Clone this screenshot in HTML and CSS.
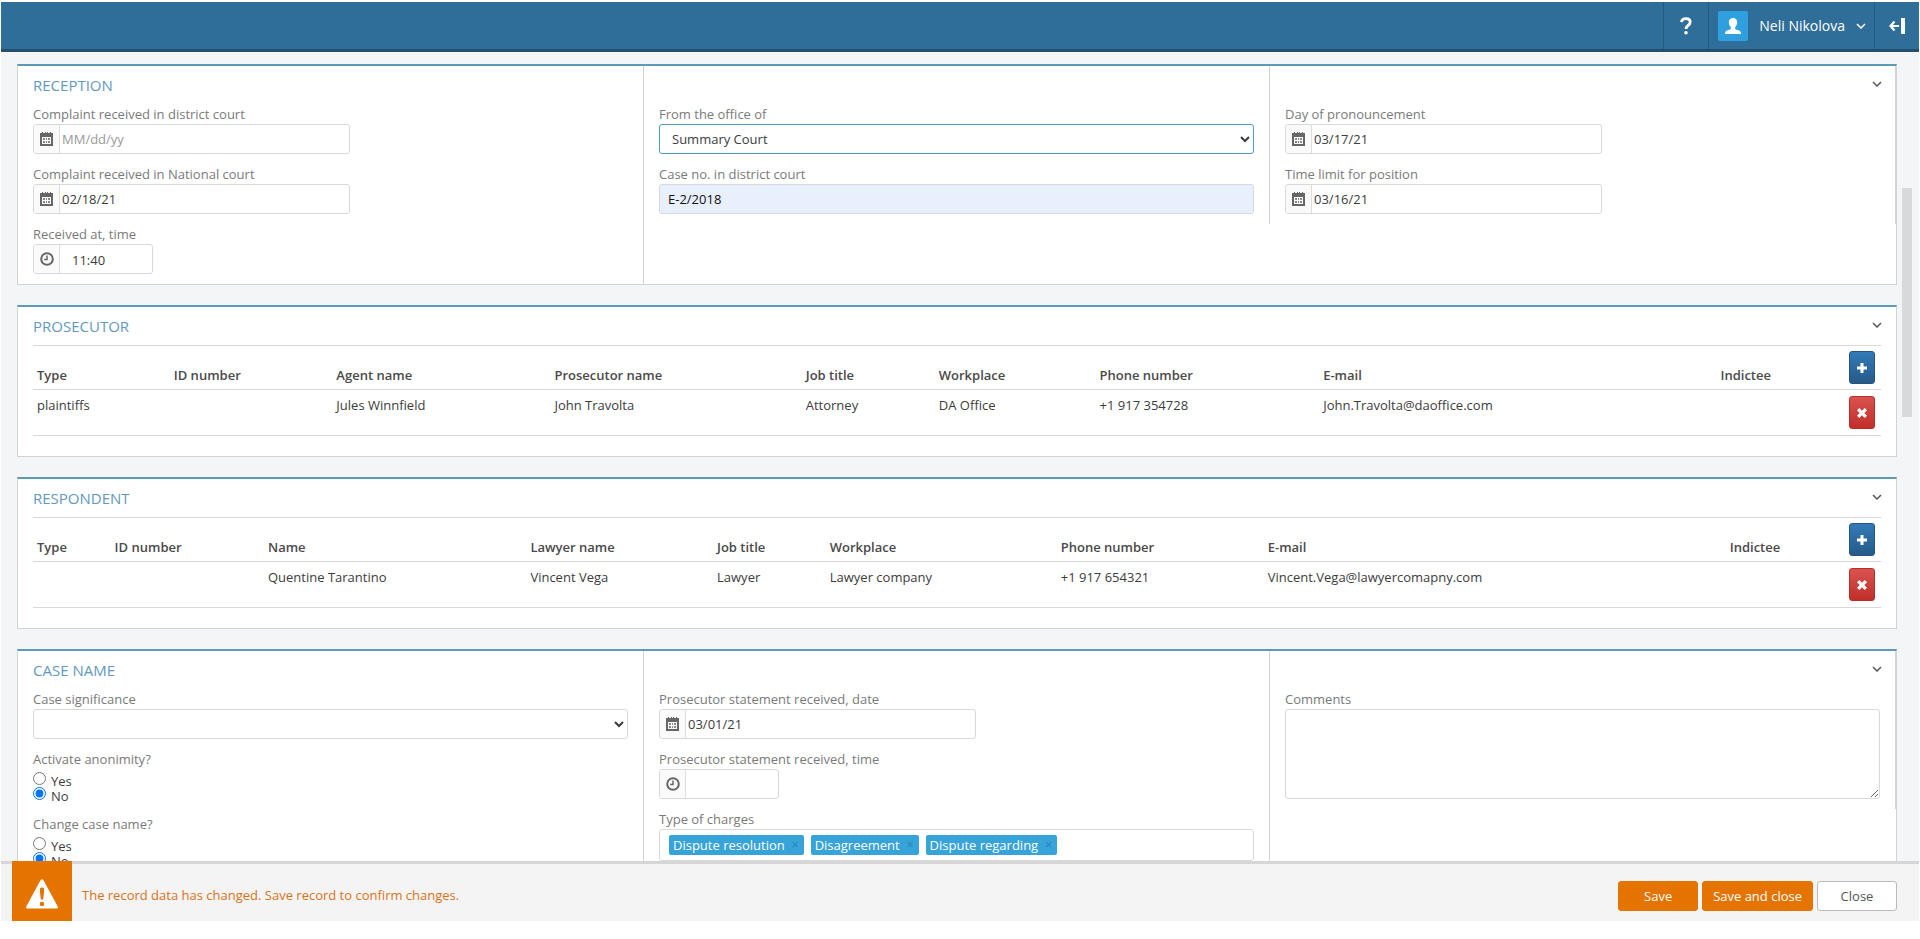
FILE: index.html
```html
<!DOCTYPE html>
<html lang="en">
<head>
    <meta charset="UTF-8">
    <meta name="viewport" content="width=device-width, initial-scale=1.0">
    <title>Case record</title>
    <link rel="stylesheet" href="styles.css">
</head>
<body>
    <!-- Shared icons -->
    <svg class="icon-defs" aria-hidden="true">
        <symbol id="icon-calendar" viewBox="0 0 13 14">
            <path d="M0 1h13v13H0zM2 5v7h9V5z" fill-rule="evenodd"/>
            <path d="M2 0h1v2H2zM5 0h1v2H5zM7 0h1v2H7zM10 0h1v2h-1z"/>
            <path d="M3 6h2v2H3zM6 6h1v2H6zM8 6h2v2H8zM3 9h2v2H3zM6 9h1v2H6zM8 9h2v2H8z" fill="#888"/>
        </symbol>
        <symbol id="icon-clock" viewBox="0 0 14 14">
            <circle cx="7" cy="7" r="5.8" fill="none" stroke="currentColor" stroke-width="2"/>
            <path d="M7 3.5V7.5H4.2" fill="none" stroke="currentColor" stroke-width="1.5"/>
        </symbol>
        <symbol id="icon-chevron" viewBox="0 0 10 6">
            <path d="M1 1l4 4 4-4" fill="none" stroke="currentColor" stroke-width="1.5"/>
        </symbol>
        <symbol id="icon-plus" viewBox="0 0 12 12">
            <path d="M4.5 1h3v3.500H11v3H7.500V11h-3V7.500H1v-3h3.500z"/>
        </symbol>
        <symbol id="icon-remove" viewBox="0 0 12 12">
            <path d="M3.300 1L6 3.700 8.700 1 11 3.300 8.300 6 11 8.700 8.700 11 6 8.300 3.300 11 1 8.700 3.700 6 1 3.300z"/>
        </symbol>
    </svg>

    <div class="app">
        <header class="topbar">
            <button class="topbar-item help-btn" type="button" aria-label="Help">
                <svg width="14" height="18" viewBox="0 0 14 18" aria-hidden="true">
                    <path d="M2.500 5.200C2.700 2.800 4.500 1.600 6.900 1.600c2.500 0 4.300 1.300 4.300 3.500 0 2-1.200 2.800-2.500 3.700C7.500 9.600 7 10.200 7 12" fill="none" stroke="currentColor" stroke-width="2.800"/>
                    <circle cx="7" cy="15.700" r="1.800" fill="currentColor"/>
                </svg>
            </button>
            <button class="topbar-item user-btn" type="button">
                <span class="avatar">
                    <svg width="18" height="18" viewBox="0 0 18 18" aria-hidden="true">
                        <path d="M9 1c2.600 0 4.200 1.800 4.200 4.300 0 2-.8 3.700-2 4.700v1.500c0 .8 1 1.100 2.500 1.600 2 .7 3.300 1.400 3.300 3.900H1c0-2.500 1.300-3.200 3.300-3.900 1.500-.5 2.500-.8 2.500-1.600V10c-1.200-1-2-2.700-2-4.700C4.800 2.800 6.400 1 9 1z"/>
                    </svg>
                </span>
                <span>Neli Nikolova</span>
                <svg width="10" height="6" aria-hidden="true"><use href="#icon-chevron"/></svg>
            </button>
            <button class="topbar-item logout-btn" type="button" aria-label="Log out">
                <svg width="16" height="16" viewBox="0 0 16 16" aria-hidden="true">
                    <path d="M12 0h4v16h-4z"/>
                    <path d="M1.500 8H10M5.500 3.500L1.500 8l4 4.500" fill="none" stroke="currentColor" stroke-width="2.200"/>
                </svg>
            </button>
        </header>

        <main class="content">
            <section class="panel">
                <button class="panel-toggle" type="button" aria-label="Collapse reception">
                    <svg width="10" height="6" aria-hidden="true"><use href="#icon-chevron"/></svg>
                </button>
                <div class="columns">
                    <div class="column">
                        <h2 class="panel-title">Reception</h2>
                        <div class="field">
                            <label for="districtReceived">Complaint received in district court</label>
                            <div class="input-group date-group">
                                <span class="addon"><svg width="13" height="14" aria-hidden="true"><use href="#icon-calendar"/></svg></span>
                                <input type="text" id="districtReceived" placeholder="MM/dd/yy">
                            </div>
                        </div>
                        <div class="field">
                            <label for="nationalReceived">Complaint received in National court</label>
                            <div class="input-group date-group">
                                <span class="addon"><svg width="13" height="14" aria-hidden="true"><use href="#icon-calendar"/></svg></span>
                                <input type="text" id="nationalReceived" value="02/18/21">
                            </div>
                        </div>
                        <div class="field">
                            <label for="receivedTime">Received at, time</label>
                            <div class="input-group time-group">
                                <span class="addon"><svg width="14" height="14" aria-hidden="true"><use href="#icon-clock"/></svg></span>
                                <input type="text" id="receivedTime" value="11:40">
                            </div>
                        </div>
                    </div>
                    <div class="column column-untitled">
                        <div class="field">
                            <label for="office">From the office of</label>
                            <select id="office" class="control control-active">
                                <option>Summary Court</option>
                            </select>
                        </div>
                        <div class="field">
                            <label for="caseNo">Case no. in district court</label>
                            <input type="text" id="caseNo" class="control control-filled" value="E-2/2018">
                        </div>
                    </div>
                    <div class="column column-untitled">
                        <div class="field">
                            <label for="pronouncementDay">Day of pronouncement</label>
                            <div class="input-group date-group">
                                <span class="addon"><svg width="13" height="14" aria-hidden="true"><use href="#icon-calendar"/></svg></span>
                                <input type="text" id="pronouncementDay" value="03/17/21">
                            </div>
                        </div>
                        <div class="field">
                            <label for="positionLimit">Time limit for position</label>
                            <div class="input-group date-group">
                                <span class="addon"><svg width="13" height="14" aria-hidden="true"><use href="#icon-calendar"/></svg></span>
                                <input type="text" id="positionLimit" value="03/16/21">
                            </div>
                        </div>
                    </div>
                </div>
            </section>

            <section class="panel panel-table">
                <button class="panel-toggle" type="button" aria-label="Collapse prosecutor">
                    <svg width="10" height="6" aria-hidden="true"><use href="#icon-chevron"/></svg>
                </button>
                <h2 class="panel-title">Prosecutor</h2>
                <table class="people prosecutors">
                    <thead>
                        <tr>
                            <th>Type</th>
                            <th>ID number</th>
                            <th>Agent name</th>
                            <th>Prosecutor name</th>
                            <th>Job title</th>
                            <th>Workplace</th>
                            <th>Phone number</th>
                            <th>E-mail</th>
                            <th>Indictee</th>
                            <th class="action"><button class="row-btn add-btn" type="button" aria-label="Add prosecutor"><svg width="12" height="12" aria-hidden="true"><use href="#icon-plus"/></svg></button></th>
                        </tr>
                    </thead>
                    <tbody>
                        <tr>
                            <td>plaintiffs</td>
                            <td></td>
                            <td>Jules Winnfield</td>
                            <td>John Travolta</td>
                            <td>Attorney</td>
                            <td>DA Office</td>
                            <td>+1 917 354728</td>
                            <td>John.Travolta@daoffice.com</td>
                            <td></td>
                            <td class="action"><button class="row-btn remove-btn" type="button" aria-label="Remove prosecutor"><svg width="12" height="12" aria-hidden="true"><use href="#icon-remove"/></svg></button></td>
                        </tr>
                    </tbody>
                </table>
            </section>

            <section class="panel panel-table">
                <button class="panel-toggle" type="button" aria-label="Collapse respondent">
                    <svg width="10" height="6" aria-hidden="true"><use href="#icon-chevron"/></svg>
                </button>
                <h2 class="panel-title">Respondent</h2>
                <table class="people respondents">
                    <thead>
                        <tr>
                            <th>Type</th>
                            <th>ID number</th>
                            <th>Name</th>
                            <th>Lawyer name</th>
                            <th>Job title</th>
                            <th>Workplace</th>
                            <th>Phone number</th>
                            <th>E-mail</th>
                            <th>Indictee</th>
                            <th class="action"><button class="row-btn add-btn" type="button" aria-label="Add respondent"><svg width="12" height="12" aria-hidden="true"><use href="#icon-plus"/></svg></button></th>
                        </tr>
                    </thead>
                    <tbody>
                        <tr>
                            <td></td>
                            <td></td>
                            <td>Quentine Tarantino</td>
                            <td>Vincent Vega</td>
                            <td>Lawyer</td>
                            <td>Lawyer company</td>
                            <td>+1 917 654321</td>
                            <td>Vincent.Vega@lawyercomapny.com</td>
                            <td></td>
                            <td class="action"><button class="row-btn remove-btn" type="button" aria-label="Remove respondent"><svg width="12" height="12" aria-hidden="true"><use href="#icon-remove"/></svg></button></td>
                        </tr>
                    </tbody>
                </table>
            </section>

            <section class="panel">
                <button class="panel-toggle" type="button" aria-label="Collapse case name">
                    <svg width="10" height="6" aria-hidden="true"><use href="#icon-chevron"/></svg>
                </button>
                <div class="columns">
                    <div class="column">
                        <h2 class="panel-title">Case name</h2>
                        <div class="field">
                            <label for="significance">Case significance</label>
                            <select id="significance" class="control">
                                <option></option>
                            </select>
                        </div>
                        <fieldset class="field">
                            <legend>Activate anonimity?</legend>
                            <div class="radios">
                                <label><input type="radio" name="anonimity"><span>Yes</span></label>
                                <label><input type="radio" name="anonimity" checked><span>No</span></label>
                            </div>
                        </fieldset>
                        <fieldset class="field">
                            <legend>Change case name?</legend>
                            <div class="radios">
                                <label><input type="radio" name="changeName"><span>Yes</span></label>
                                <label><input type="radio" name="changeName" checked><span>No</span></label>
                            </div>
                        </fieldset>
                    </div>
                    <div class="column column-untitled">
                        <div class="field">
                            <label for="statementDate">Prosecutor statement received, date</label>
                            <div class="input-group date-group">
                                <span class="addon"><svg width="13" height="14" aria-hidden="true"><use href="#icon-calendar"/></svg></span>
                                <input type="text" id="statementDate" value="03/01/21">
                            </div>
                        </div>
                        <div class="field">
                            <label for="statementTime">Prosecutor statement received, time</label>
                            <div class="input-group time-group">
                                <span class="addon"><svg width="14" height="14" aria-hidden="true"><use href="#icon-clock"/></svg></span>
                                <input type="text" id="statementTime">
                            </div>
                        </div>
                        <div class="field">
                            <label for="charges">Type of charges</label>
                            <div class="tags-input">
                                <span class="tag">Dispute resolution <button type="button" aria-label="Remove Dispute resolution">×</button></span>
                                <span class="tag">Disagreement <button type="button" aria-label="Remove Disagreement">×</button></span>
                                <span class="tag">Dispute regarding <button type="button" aria-label="Remove Dispute regarding">×</button></span>
                                <input type="text" id="charges">
                            </div>
                        </div>
                    </div>
                    <div class="column column-untitled">
                        <div class="field">
                            <label for="comments">Comments</label>
                            <textarea id="comments" class="control"></textarea>
                        </div>
                    </div>
                </div>
            </section>

            <div class="scroll-thumb"></div>
        </main>

        <footer class="actionbar">
            <span class="warning-icon">
                <svg width="32" height="30" viewBox="0 0 32 30" aria-hidden="true">
                    <path d="M14.500 1.200c.7-1.300 2.300-1.300 3 0L31.600 27.300c.7 1.200 0 2.200-1.300 2.200H1.700c-1.300 0-2-1-1.300-2.200zM14 10v3l.8 7.500h2.400L18 13v-3c0-1-.8-1.500-2-1.500s-2 .5-2 1.500zM16 22.800a2.200 2.200 0 100 4.400 2.200 2.200 0 000-4.400z" fill-rule="evenodd"/>
                </svg>
            </span>
            <p class="warning-text">The record data has changed. Save record to confirm changes.</p>
            <div class="actions">
                <button class="btn btn-primary" type="button">Save</button>
                <button class="btn btn-primary" type="button">Save and close</button>
                <button class="btn" type="button">Close</button>
            </div>
        </footer>
    </div>
</body>
</html>
```
FILE: styles.css
```css
:root {
    --header-color: #2e6e99;
    --accent-color: #5b9bb8;
    --warning-color: #e57300;
    --border-color: #cfd4d8;
    --input-border: #d9d9d9;
}

* {
    box-sizing: border-box;
}

body {
    margin: 0;
    padding: 2px 1px 18px;
    height: 100vh;
    overflow: hidden;
    font-family: 'Open Sans', sans-serif;
    font-size: 13px;
    line-height: 18px;
    color: #3c3c3c;
    background: white;
}

button,
input,
select,
textarea {
    font: inherit;
    color: inherit;
}

button {
    cursor: pointer;
}

svg {
    display: block;
    fill: currentColor;
}

.icon-defs {
    position: absolute;
    width: 0;
    height: 0;
}

.app {
    display: flex;
    flex-direction: column;
    height: 100%;
    background: #f3f5f7;
}

/* Top bar */
.topbar {
    display: flex;
    justify-content: flex-end;
    flex-shrink: 0;
    height: 50px;
    background: var(--header-color);
    border-bottom: 3px solid #264f6e;
}

.topbar-item {
    display: flex;
    align-items: center;
    justify-content: center;
    padding: 0;
    background: none;
    border: none;
    border-left: 1px solid #245a80;
    color: white;
}

.help-btn,
.logout-btn {
    width: 45px;
}

.user-btn {
    gap: 11px;
    padding: 0 8px 0 9px;
    font-size: 14px;
}

.avatar {
    display: flex;
    align-items: center;
    justify-content: center;
    width: 30px;
    height: 30px;
    background: #2f9fe0;
    border-radius: 2px;
}

/* Panels */
.content {
    position: relative;
    flex: 1;
    min-height: 0;
    overflow: hidden;
    padding: 12px 22px 0 16px;
}

.scroll-thumb {
    position: absolute;
    top: 136px;
    right: 7px;
    width: 10px;
    height: 229px;
    background: #d8d9db;
}

.panel {
    position: relative;
    margin-bottom: 20px;
    background: white;
    border: 1px solid var(--border-color);
    border-top: 2px solid var(--accent-color);
}

.panel-table {
    padding: 0 15px 20px;
}

.panel-title {
    margin: 0;
    font-size: 15px;
    font-weight: normal;
    line-height: 38px;
    text-transform: uppercase;
    color: #6299bd;
}

.panel-toggle {
    position: absolute;
    top: 10px;
    right: 9px;
    padding: 5px;
    background: none;
    border: none;
    color: #555;
}

.columns {
    display: grid;
    grid-template-columns: repeat(3, 1fr);
    align-items: start;
}

.column {
    padding: 0 15px;
    border-right: 1px solid var(--border-color);
}

.column-untitled {
    padding-top: 38px;
}

/* Fields */
.field {
    margin: 0;
    padding: 0 0 10px;
    border: none;
}

.field > label,
.field > legend {
    display: block;
    padding: 0;
    line-height: 20px;
    color: #7a7a7a;
}

.control,
.input-group,
.tags-input {
    display: flex;
    width: 100%;
    height: 30px;
    background: white;
    border: 1px solid var(--input-border);
    border-radius: 3px;
}

.control {
    display: block;
    padding: 0 8px;
}

.control-active {
    border-color: #4d9fba;
    outline: none;
}

.control-filled {
    background: #e8f0fe;
    color: #111;
}

textarea.control {
    height: 90px;
}

.input-group {
    overflow: hidden;
}

.date-group {
    max-width: 317px;
}

.time-group {
    max-width: 120px;
}

.input-group input {
    flex: 1;
    min-width: 0;
    padding: 0 2px;
    border: none;
    background: none;
}

.time-group input {
    padding: 2px 12px 0;
}

.input-group input::placeholder {
    color: #999;
}

.addon {
    display: flex;
    align-items: center;
    justify-content: center;
    width: 26px;
    background: #fafafa;
    border-right: 1px solid #ddd;
    color: #666;
}

.radios {
    padding: 2px 0 3px;
}

.radios label {
    display: flex;
    align-items: center;
    gap: 5px;
    height: 15px;
}

.radios span {
    padding-top: 4px;
}

.radios input {
    width: 13px;
    height: 13px;
    margin: 0;
}

.tags-input {
    align-items: center;
    gap: 7px;
    height: 32px;
    padding: 0 9px;
}

.tag {
    display: flex;
    align-items: center;
    gap: 7px;
    height: 20px;
    padding: 0 5px 0 4px;
    background: #36a3d9;
    border-radius: 2px;
    color: white;
}

.tag button {
    padding: 0;
    background: none;
    border: none;
    font-size: 12px;
    line-height: 16px;
    color: #2b7eb0;
}

.tags-input input {
    flex: 1;
    min-width: 0;
    border: none;
}

/* Tables */
.people {
    width: 100%;
    table-layout: fixed;
    border-spacing: 0;
    border-top: 1px solid #d8d8d8;
}

.people th,
.people td {
    border-bottom: 1px solid #d8d8d8;
    text-align: left;
}

.people th {
    padding: 5px 4px;
    font-weight: 600;
    color: #4a4a4a;
    vertical-align: bottom;
}

.people td {
    padding: 6px 4px;
    vertical-align: top;
}

.people .action {
    width: 36px;
}

.prosecutors th:nth-child(1) { width: 7.4%; }
.prosecutors th:nth-child(2) { width: 8.8%; }
.prosecutors th:nth-child(3) { width: 11.8%; }
.prosecutors th:nth-child(4) { width: 13.6%; }
.prosecutors th:nth-child(5) { width: 7.2%; }
.prosecutors th:nth-child(6) { width: 8.7%; }
.prosecutors th:nth-child(7) { width: 12.1%; }
.prosecutors th:nth-child(8) { width: 21.5%; }

.respondents th:nth-child(1) { width: 4.2%; }
.respondents th:nth-child(2) { width: 8.3%; }
.respondents th:nth-child(3) { width: 14.2%; }
.respondents th:nth-child(4) { width: 10.1%; }
.respondents th:nth-child(5) { width: 6.1%; }
.respondents th:nth-child(6) { width: 12.5%; }
.respondents th:nth-child(7) { width: 11.2%; }
.respondents th:nth-child(8) { width: 25%; }

.row-btn {
    display: flex;
    align-items: center;
    justify-content: center;
    width: 26px;
    height: 33px;
    padding: 0;
    border-radius: 3px;
    color: white;
}

.add-btn {
    background: linear-gradient(#337ab7, #265a88);
    border: 1px solid #245580;
}

.remove-btn {
    background: linear-gradient(#d9534f, #c12e2a);
    border: 1px solid #b92c28;
}

/* Bottom bar */
.actionbar {
    display: flex;
    align-items: flex-start;
    flex-shrink: 0;
    height: 60px;
    padding: 0 22px 0 11px;
    background: #f4f4f4;
    box-shadow: inset 0 3px #d6d6d6;
}

.warning-icon {
    display: flex;
    align-items: center;
    justify-content: center;
    width: 60px;
    height: 60px;
    padding-top: 6px;
    background: var(--warning-color);
    color: white;
}

.warning-text {
    margin: 0;
    padding: 25px 10px 0;
    color: #d9731a;
}

.actions {
    display: flex;
    gap: 4px;
    margin-left: auto;
    padding-top: 20px;
}

.btn {
    min-width: 80px;
    height: 30px;
    padding: 0 10px;
    background: white;
    border: 1px solid #bbb;
    border-radius: 3px;
    color: #555;
}

.btn-primary {
    background: var(--warning-color);
    border-color: var(--warning-color);
    color: white;
}
```
